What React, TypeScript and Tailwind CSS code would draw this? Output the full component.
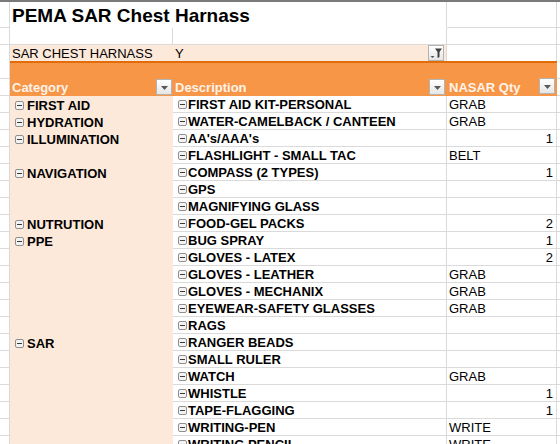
import React from 'react';

type Item = [string, string, string];

const items: Item[] = [
  ['FIRST AID', 'FIRST AID KIT-PERSONAL', 'GRAB'],
  ['HYDRATION', 'WATER-CAMELBACK / CANTEEN', 'GRAB'],
  ['ILLUMINATION', "AA's/AAA's", '1'],
  ['', 'FLASHLIGHT - SMALL TAC', 'BELT'],
  ['NAVIGATION', 'COMPASS (2 TYPES)', '1'],
  ['', 'GPS', ''],
  ['', 'MAGNIFYING GLASS', ''],
  ['NUTRUTION', 'FOOD-GEL PACKS', '2'],
  ['PPE', 'BUG SPRAY', '1'],
  ['', 'GLOVES - LATEX', '2'],
  ['', 'GLOVES - LEATHER', 'GRAB'],
  ['', 'GLOVES - MECHANIX', 'GRAB'],
  ['', 'EYEWEAR-SAFETY GLASSES', 'GRAB'],
  ['', 'RAGS', ''],
  ['SAR', 'RANGER BEADS', ''],
  ['', 'SMALL RULER', ''],
  ['', 'WATCH', 'GRAB'],
  ['', 'WHISTLE', '1'],
  ['', 'TAPE-FLAGGING', '1'],
  ['', 'WRITING-PEN', 'WRITE'],
  ['', 'WRITING PENCIL', 'WRITE'],
];

function Collapse() {
  return (
    <svg width="9" height="9" viewBox="0 0 9 9" className="shrink-0 mb-[3px]">
      <rect x="0.5" y="0.5" width="8" height="8" rx="1.5" fill="#f3f3f3" stroke="#8f8f8f" />
      <rect x="2" y="4" width="5" height="1" fill="#3a3a3a" />
    </svg>
  );
}

function DropBtn({ funnel }: { funnel?: boolean }) {
  return (
    <div className="w-[16px] h-[16px] shrink-0 border border-[#b3b3b3] bg-gradient-to-b from-white to-[#e6e6e6] flex items-center justify-center">
      {funnel ? (
        <svg width="14" height="14" viewBox="0 0 14 14">
          <polygon points="1.5,10 5.5,10 3.5,12" fill="#505050" />
          <polygon points="6,2.5 13,2.5 10.5,6 10.5,11 8.5,12 8.5,6" fill="#404040" />
        </svg>
      ) : (
        <svg width="9" height="6" viewBox="0 0 9 6" className="mt-[2px]">
          <polygon points="1,1 8,1 4.5,5" fill="#595959" />
        </svg>
      )}
    </div>
  );
}

const cell = 'flex items-end border-[#dadada] shrink-0';

export default function App() {
  return (
    <div className="w-[560px] h-[444px] overflow-hidden bg-white font-['Liberation_Sans',Arial,sans-serif] text-[13px] leading-[15px] text-black">
      <div className="h-[2px] bg-[#7a7a7a]" />

      {/* title */}
      <div className="flex h-[26px]">
        <div className={`${cell} w-[10px] border-r border-b`} />
        <div className={`${cell} w-[437px] border-r border-b border-b-white pl-[2px]`}>
          <span className="text-[19px] leading-[22px] font-bold">PEMA SAR Chest Harnass</span>
        </div>
        <div className={`${cell} w-[110px] border-r border-b`} />
        <div className={`${cell} flex-1 border-b`} />
      </div>

      {/* blank */}
      <div className="flex h-[17px]">
        <div className={`${cell} w-[10px] border-r border-b`} />
        <div className={`${cell} w-[163px] border-r border-b`} />
        <div className={`${cell} w-[274px] border-r border-b`} />
        <div className={`${cell} w-[110px] border-r border-b`} />
        <div className={`${cell} flex-1 border-b`} />
      </div>

      {/* report filter */}
      <div className="flex h-[16px]">
        <div className={`${cell} w-[10px] border-r`} />
        <div className={`${cell} w-[163px] bg-[#fde9d9] pl-[2px]`}>SAR CHEST HARNASS</div>
        <div className={`${cell} w-[274px] bg-[#fde9d9] border-r border-r-[#dadada] pl-[2px] justify-between`}>
          <span>Y</span>
          <div className="mr-[2px] mb-[1px] self-center">
            <DropBtn funnel />
          </div>
        </div>
        <div className={`${cell} w-[110px] border-r`} />
        <div className={`${cell} flex-1`} />
      </div>

      {/* pivot top */}
      <div className="flex h-[18px]">
        <div className={`${cell} w-[10px] border-r border-b`} />
        <div className="w-[547px] shrink-0 bg-[#f79646] border-t-2 border-[#e26b0a]" />
        <div className={`${cell} flex-1 border-b`} />
      </div>

      {/* pivot headers */}
      <div className="flex h-[17px]">
        <div className={`${cell} w-[10px] border-r border-b`} />
        <div className={`${cell} w-[163px] bg-[#f79646] pl-[2px] pb-[1px] justify-between font-bold text-[#fff3ea]`}>
          <span>Category</span>
          <div className="mr-[1px]">
            <DropBtn />
          </div>
        </div>
        <div className={`${cell} w-[274px] bg-[#f79646] pl-[2px] pb-[1px] justify-between font-bold text-[#fff3ea]`}>
          <span>Description</span>
          <div className="mr-[2px]">
            <DropBtn />
          </div>
        </div>
        <div className={`${cell} w-[110px] bg-[#f79646] pl-[2px] pb-[1px] justify-between font-bold text-[#fff3ea]`}>
          <span>NASAR Qty</span>
          <div className="mr-[2px] mb-[1px]">
            <DropBtn />
          </div>
        </div>
        <div className={`${cell} flex-1 border-b`} />
      </div>

      {items.map(([cat, desc, qty], i) => (
        <div key={i} className="flex h-[17px]">
          <div className={`${cell} w-[10px] border-r border-b`} />
          <div className={`${cell} w-[163px] bg-[#fde9d9] pl-[5px] gap-[3px] font-bold`}>
            {cat && (
              <>
                <Collapse />
                <span>{cat}</span>
              </>
            )}
          </div>
          <div className={`${cell} w-[274px] border-r border-b pl-[5px] gap-[1px] font-bold`}>
            <Collapse />
            <span>{desc}</span>
          </div>
          <div
            className={`${cell} w-[110px] border-r border-b ${
              /^\d+$/.test(qty) ? 'justify-end pr-[3px]' : 'pl-[2px]'
            }`}
          >
            {qty}
          </div>
          <div className={`${cell} flex-1 border-b`} />
        </div>
      ))}
    </div>
  );
}
